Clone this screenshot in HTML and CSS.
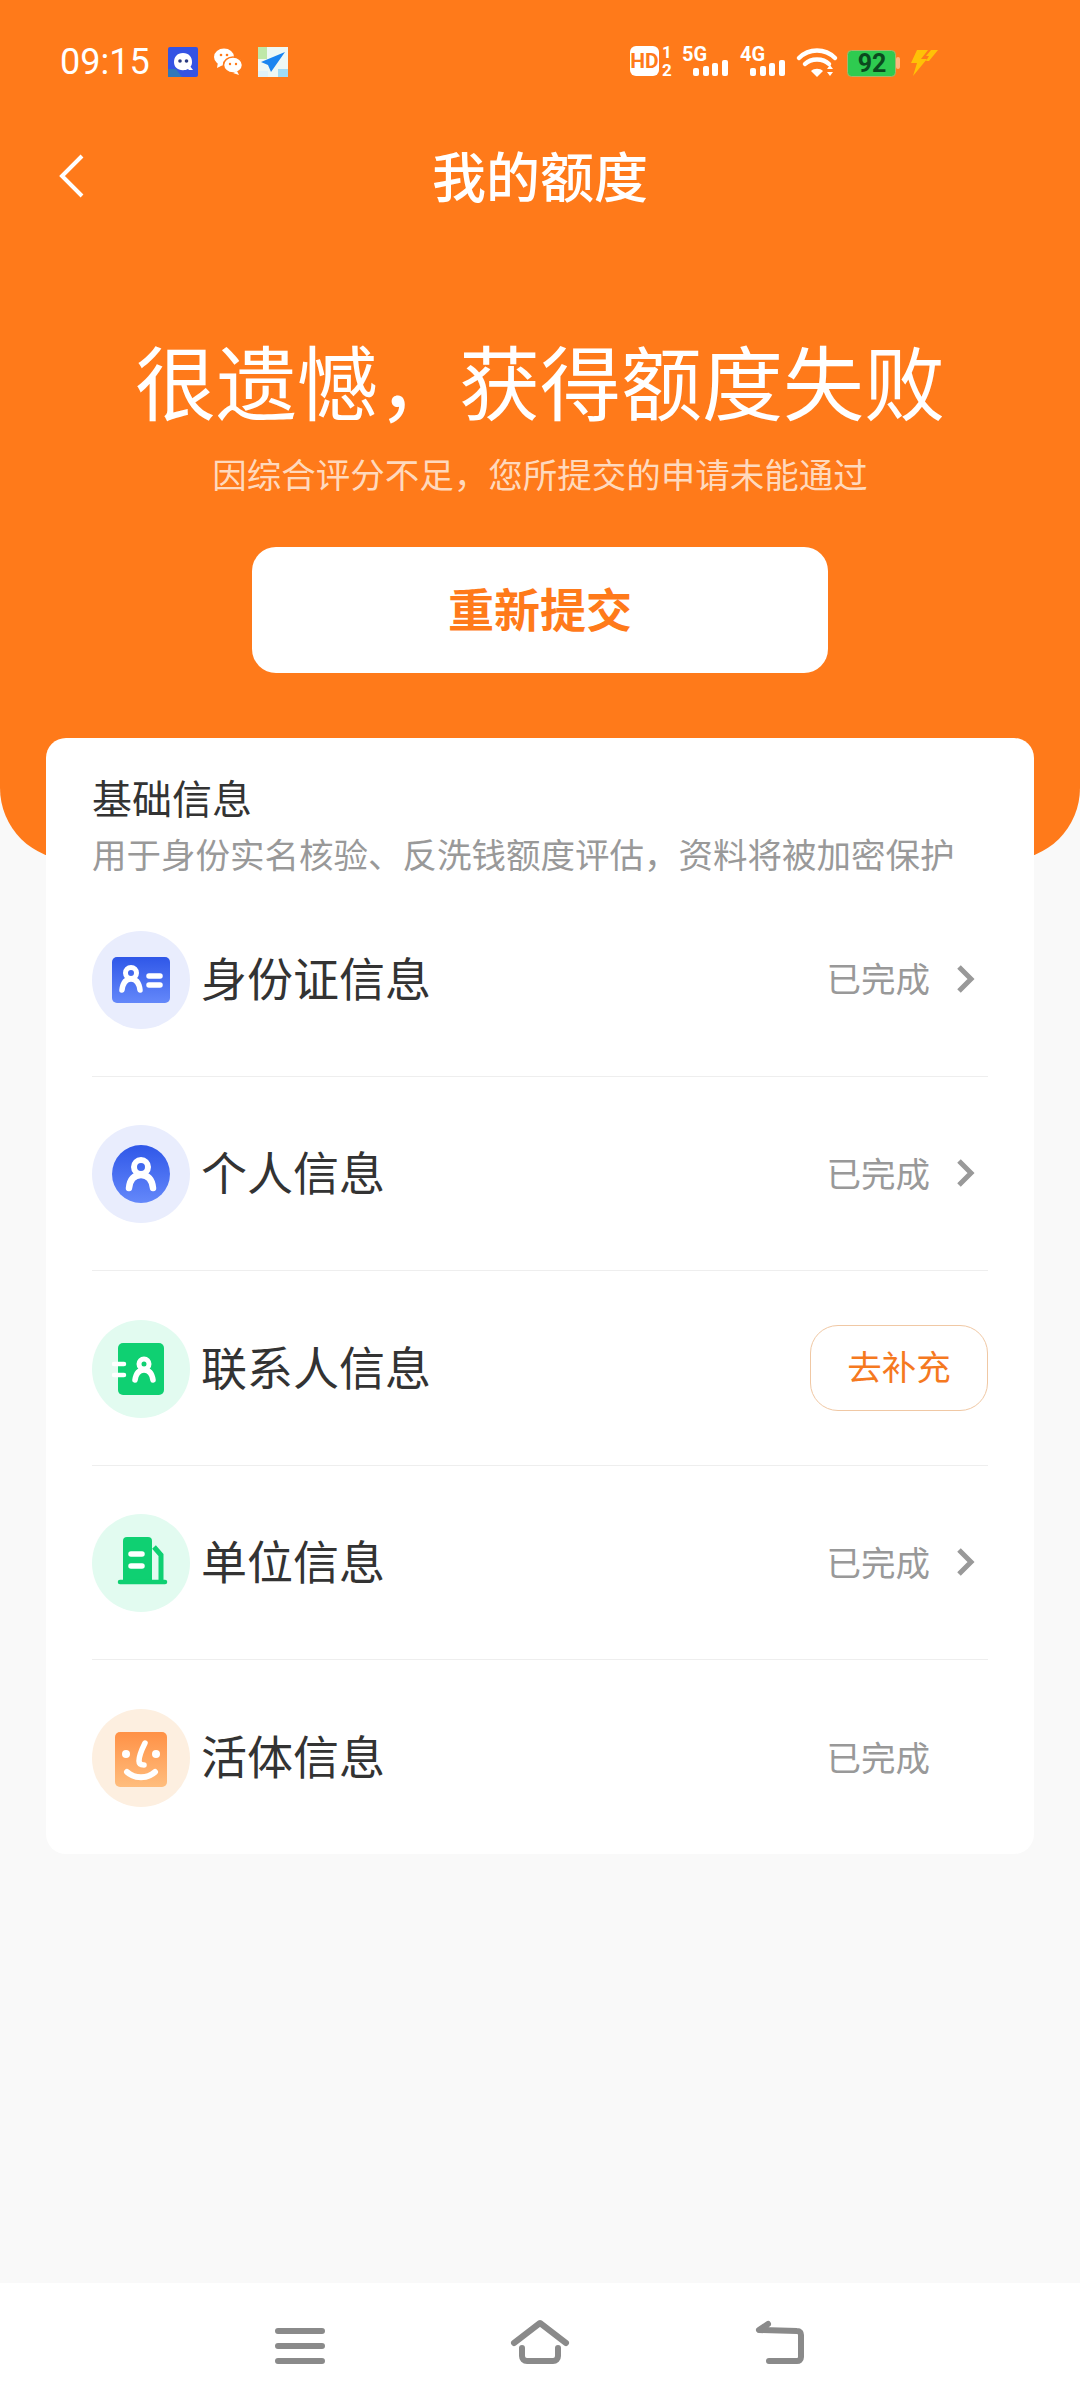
FILE: index.html
```html
<!DOCTYPE html>
<html lang="zh">
<head>
    <meta charset="utf-8">
    <title>我的额度</title>
    <link rel="stylesheet" href="styles.css">
</head>
<body>
    <div class="page">
        <header class="header">
            <div class="status">
                <span class="time">09:15</span>
                <svg class="app app-first" viewBox="0 0 30 30">
                    <rect width="30" height="30" rx="2" fill="#3453e4"/>
                    <path d="M0 22h8l6 8H0z" fill="#2f78b8"/>
                    <path d="M15 6c6 0 9 4 9 9 0 2-.5 3.500-1.500 4.800l2.500 3.200h-4l-1-1c-1.500.8-3 1.200-5 1.200-6 0-9-3.500-9-8.200S9 6 15 6z" fill="#fff"/>
                    <circle cx="12" cy="14" r="1.800" fill="#2a3a80"/>
                    <circle cx="18.500" cy="14" r="1.800" fill="#2a3a80"/>
                </svg>
                <svg class="app app-chat" viewBox="0 0 30 30">
                    <ellipse cx="11" cy="10" rx="10" ry="8.500" fill="#fff"/>
                    <path d="M5 15l-1 6 6-3z" fill="#fff"/>
                    <ellipse cx="20" cy="18" rx="9.500" ry="8" fill="#fff" stroke="#ff7a1a" stroke-width="1.500"/>
                    <path d="M24 24l2 4-6-2z" fill="#fff"/>
                    <circle cx="8" cy="8" r="1.300" fill="#ff7a1a"/>
                    <circle cx="14" cy="8" r="1.300" fill="#ff7a1a"/>
                    <circle cx="17" cy="17" r="1.200" fill="#ff7a1a"/>
                    <circle cx="23" cy="17" r="1.200" fill="#ff7a1a"/>
                </svg>
                <svg class="app app-map" viewBox="0 0 30 30">
                    <rect width="30" height="30" fill="#eef8f4"/>
                    <rect width="9" height="12" fill="#bfe8a8"/>
                    <rect x="20" y="22" width="10" height="8" fill="#9fdcf5"/>
                    <rect x="0" y="24" width="10" height="6" fill="#dff3fb"/>
                    <path d="M27 5L3 15l7 3 3 7z" fill="#1a85f0"/>
                </svg>
                <svg class="indicators" viewBox="0 0 330 48">
                    <rect x="10" y="8" width="29" height="30" rx="6" fill="#fff"/>
                    <text x="24.500" y="30" class="ind-hd">HD</text>
                    <text x="47" y="20" class="ind-sim">1</text>
                    <text x="47" y="38" class="ind-sim">2</text>

                    <text x="62" y="23" class="ind-net">5G</text>
                    <rect x="73" y="30" width="6" height="8" rx="2" fill="#fff"/>
                    <rect x="83" y="28" width="6" height="10" rx="2" fill="#fff"/>
                    <rect x="92" y="25" width="6" height="13" rx="2" fill="#fff"/>
                    <rect x="102" y="22" width="6" height="16" rx="2" fill="#fff"/>

                    <text x="120" y="23" class="ind-net">4G</text>
                    <rect x="130" y="30" width="6" height="8" rx="2" fill="#fff"/>
                    <rect x="140" y="28" width="6" height="10" rx="2" fill="#fff"/>
                    <rect x="149" y="25" width="6" height="13" rx="2" fill="#fff"/>
                    <rect x="159" y="22" width="6" height="16" rx="2" fill="#fff"/>

                    <g fill="none" stroke="#fff" stroke-width="4.500" stroke-linecap="round">
                        <path d="M179 20c10-10 26-10 36 0"/>
                        <path d="M185 26c6-6 18-6 24 0"/>
                    </g>
                    <path d="M191 33c3-3 9-3 12 0l-6 6z" fill="#fff"/>
                    <path d="M207 31l3-4 3 4zM207 34l3 4 3-4z" fill="#fff"/>

                    <rect x="227.500" y="12.500" width="48" height="26" rx="4" fill="#2ecb50" stroke="#a9b56a"/>
                    <rect x="276" y="19" width="4" height="12" rx="2" fill="#ffb67e"/>
                    <text x="252" y="34" class="ind-bat">92</text>

                    <path d="M297 12h11l-7 9h6l-14 17 4-13h-6zM311 12h7l-9 11h-3l3-5h-3z" fill="#ffc107"/>
                </svg>
            </div>
            <div class="nav">
                <svg class="nav-back" viewBox="0 0 30 48">
                    <path d="M24 4L4 24l20 20" fill="none" stroke="#fff" stroke-width="4"/>
                </svg>
                <h2 class="nav-title">我的额度</h2>
            </div>
            <h1 class="hero-title">很遗憾，获得额度失败</h1>
            <p class="hero-sub">因综合评分不足，您所提交的申请未能通过</p>
            <button class="resubmit">重新提交</button>
        </header>

        <main class="card">
            <h3 class="card-title">基础信息</h3>
            <p class="card-sub">用于身份实名核验、反洗钱额度评估，资料将被加密保护</p>

            <div class="row">
                <svg class="row-icon" viewBox="0 0 98 98">
                    <defs>
                        <linearGradient id="blue" x1="0" y1="0" x2="0" y2="1">
                            <stop offset="0" stop-color="#2f57e8"/>
                            <stop offset="1" stop-color="#6488fa"/>
                        </linearGradient>
                        <linearGradient id="peach" x1="0" y1="0" x2="0" y2="1">
                            <stop offset="0" stop-color="#ff9146"/>
                            <stop offset="1" stop-color="#ffbd7d"/>
                        </linearGradient>
                    </defs>
                    <circle cx="49" cy="49" r="49" fill="#e9edfd"/>
                    <rect x="20" y="26" width="58" height="46" rx="5" fill="url(#blue)"/>
                    <circle cx="39" cy="42" r="5.500" fill="none" stroke="#fff" stroke-width="5"/>
                    <path d="M30 59c1-8 4-11 9-11s8 3 9 11" fill="none" stroke="#fff" stroke-width="5.500" stroke-linecap="round"/>
                    <path d="M57 45h11M57 54h11" stroke="#fff" stroke-width="5.500" stroke-linecap="round"/>
                </svg>
                <span class="row-label">身份证信息</span>
                <span class="row-state">已完成</span>
                <svg class="row-arrow" viewBox="0 0 18 28"><path d="M2 2l12 12L2 26" fill="none" stroke="#999" stroke-width="5"/></svg>
            </div>

            <div class="row">
                <svg class="row-icon" viewBox="0 0 98 98">
                    <circle cx="49" cy="49" r="49" fill="#e9edfd"/>
                    <circle cx="49" cy="49" r="29" fill="url(#blue)"/>
                    <circle cx="49" cy="42" r="7" fill="none" stroke="#fff" stroke-width="6"/>
                    <path d="M37 63c1-9 5-13 12-13s11 4 12 13" fill="none" stroke="#fff" stroke-width="6.500" stroke-linecap="round"/>
                </svg>
                <span class="row-label">个人信息</span>
                <span class="row-state">已完成</span>
                <svg class="row-arrow" viewBox="0 0 18 28"><path d="M2 2l12 12L2 26" fill="none" stroke="#999" stroke-width="5"/></svg>
            </div>

            <div class="row">
                <svg class="row-icon" viewBox="0 0 98 98">
                    <circle cx="49" cy="49" r="49" fill="#e2fbf0"/>
                    <rect x="26" y="23" width="46" height="52" rx="5" fill="#0fd072"/>
                    <path d="M22 44h10M22 55h10" stroke="#fff" stroke-width="4.500" stroke-linecap="round"/>
                    <circle cx="52" cy="44" r="5" fill="none" stroke="#fff" stroke-width="5"/>
                    <path d="M43 60c1-7 4-10 9-10s8 3 9 10" fill="none" stroke="#fff" stroke-width="5.500" stroke-linecap="round"/>
                </svg>
                <span class="row-label">联系人信息</span>
                <button class="fill-btn">去补充</button>
            </div>

            <div class="row">
                <svg class="row-icon" viewBox="0 0 98 98">
                    <circle cx="49" cy="49" r="49" fill="#e2fbf0"/>
                    <path d="M31 27a4 4 0 0 1 4-4h21a4 4 0 0 1 4 4v39H31z" fill="#0fd072"/>
                    <path d="M62 33l7 8v27" fill="none" stroke="#0fd072" stroke-width="5"/>
                    <path d="M28 68h45" stroke="#0fd072" stroke-width="4.500" stroke-linecap="round"/>
                    <path d="M39 40h11M39 52h11" stroke="#fff" stroke-width="5.500" stroke-linecap="round"/>
                </svg>
                <span class="row-label">单位信息</span>
                <span class="row-state">已完成</span>
                <svg class="row-arrow" viewBox="0 0 18 28"><path d="M2 2l12 12L2 26" fill="none" stroke="#999" stroke-width="5"/></svg>
            </div>

            <div class="row">
                <svg class="row-icon" viewBox="0 0 98 98">
                    <circle cx="49" cy="49" r="49" fill="#fdefe0"/>
                    <rect x="23" y="23" width="52" height="55" rx="5" fill="url(#peach)"/>
                    <circle cx="34" cy="45" r="4" fill="#fff"/>
                    <circle cx="64" cy="45" r="4" fill="#fff"/>
                    <path d="M53 34c-3 6-6 12-6 18 0 3 2 4 5 4" fill="none" stroke="#fff" stroke-width="5.500" stroke-linecap="round"/>
                    <path d="M35 63c8 7 20 7 28 0" fill="none" stroke="#fff" stroke-width="6" stroke-linecap="round"/>
                </svg>
                <span class="row-label">活体信息</span>
                <span class="row-state">已完成</span>
                <span class="row-arrow"></span>
            </div>
        </main>

        <footer class="sysnav">
            <svg class="sys-icon" viewBox="0 0 60 60">
                <path d="M8 15h44M8 30h44M8 45h44" stroke="#8a8a8a" stroke-width="6" stroke-linecap="round"/>
            </svg>
            <svg class="sys-icon" viewBox="0 0 60 60">
                <path d="M4 27L30 7l26 20" fill="none" stroke="#8a8a8a" stroke-width="6" stroke-linecap="round" stroke-linejoin="round"/>
                <path d="M12 32v8c0 3 2 5 5 5h26c3 0 5-2 5-5v-8" fill="none" stroke="#8a8a8a" stroke-width="6" stroke-linecap="round"/>
            </svg>
            <svg class="sys-icon" viewBox="0 0 60 60">
                <path d="M18 8l-9 6 38 1c3 0 4 2 4 4v22c0 3-2 4-4 4H19" fill="none" stroke="#8a8a8a" stroke-width="6" stroke-linecap="round" stroke-linejoin="round"/>
            </svg>
        </footer>
    </div>
</body>
</html>
```

FILE: styles.css
```css
* {
    box-sizing: border-box;
}

body {
    margin: 0;
    background-color: #f9f9f9;
    font-family: "Noto Sans CJK SC", "Noto Sans", sans-serif;
}

h1, h2, h3, p {
    margin: 0;
    font-weight: 400;
}

button {
    font-family: inherit;
    background: #fff;
}

.page {
    display: flex;
    flex-direction: column;
    height: 2408px;
    overflow: hidden;
}

/* orange top part */
.header {
    display: flex;
    flex-direction: column;
    align-items: center;
    flex-shrink: 0;
    height: 860px;
    background-color: #ff7a1a;
    border-radius: 0 0 72px 72px;
    color: #fff;
}

.status {
    display: flex;
    align-items: center;
    width: 100%;
    height: 124px;
    padding: 0 130px 0 60px;
}

.time {
    font-family: Roboto, sans-serif;
    font-size: 36px;
    width: 108px;
}

.app {
    width: 30px;
    height: 30px;
    flex-shrink: 0;
}

.app-chat {
    margin-left: 15px;
}

.app-map {
    margin-left: 15px;
}

.indicators {
    width: 330px;
    height: 48px;
    margin-left: auto;
}

.indicators text {
    font-family: Roboto, sans-serif;
    font-weight: 700;
}

.ind-hd {
    font-size: 21px;
    fill: #ff7a1a;
    text-anchor: middle;
}

.ind-sim {
    font-size: 17px;
    fill: #fff;
    text-anchor: middle;
}

.ind-net {
    font-size: 20px;
    fill: #fff;
}

.ind-bat {
    font-size: 25px;
    fill: #0b4a1e;
    text-anchor: middle;
}

.nav {
    position: relative;
    display: flex;
    justify-content: center;
    align-items: center;
    width: 100%;
    height: 104px;
}

.nav-back {
    position: absolute;
    left: 58px;
    top: 28px;
    width: 30px;
    height: 48px;
}

.nav-title {
    padding-bottom: 3px;
    font-size: 54px;
    font-weight: 500;
    line-height: 101px;
}

.hero-title {
    margin-top: 101px;
    font-size: 81px;
    line-height: 100px;
}

.hero-sub {
    margin-top: 19px;
    font-size: 34.500px;
    line-height: 50px;
    color: #ffd9bd;
}

.resubmit {
    width: 576px;
    height: 126px;
    margin-top: 49px;
    padding: 0 0 6px;
    border: none;
    border-radius: 24px;
    font-size: 46px;
    font-weight: 700;
    color: #ff7a1a;
}

/* white card, sits over the header */
.card {
    flex-shrink: 0;
    width: 988px;
    margin: -122px 0 0 46px;
    padding: 36px 46px 0;
    background-color: #fff;
    border-radius: 20px;
}

.card-title {
    font-size: 40px;
    line-height: 46px;
    color: #333;
}

.card-sub {
    margin: 10px 0 6px;
    font-size: 34.500px;
    line-height: 46px;
    color: #999;
}

.row {
    display: flex;
    align-items: center;
    height: 194.500px;
    border-bottom: 1.500px solid #eeeeee;
}

.row:last-child {
    height: 194px;
    border-bottom: none;
}

.row-icon {
    width: 98px;
    height: 98px;
    margin-top: 2px;
    flex-shrink: 0;
}

.row-label {
    flex: 1;
    margin-left: 11px;
    padding-bottom: 6px;
    font-size: 46px;
    color: #333;
}

.row-state {
    padding-bottom: 3px;
    font-size: 34.500px;
    color: #999;
}

.row-arrow {
    width: 18px;
    height: 28px;
    margin: 0 13px 0 27px;
}

.fill-btn {
    width: 178px;
    height: 86px;
    padding: 0 0 5px;
    border: 1.500px solid #f0c8a4;
    border-radius: 28px;
    font-size: 34.500px;
    color: #f5791f;
}

.sysnav {
    display: flex;
    justify-content: center;
    align-items: center;
    gap: 180px;
    height: 125px;
    margin-top: auto;
    background-color: #fff;
}

.sys-icon {
    width: 60px;
    height: 60px;
}
```
